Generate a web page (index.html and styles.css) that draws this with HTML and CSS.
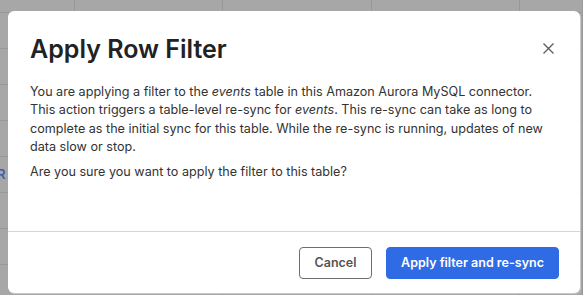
FILE: index.html
```html
<!DOCTYPE html>
<html>
<head>
<meta charset="utf-8">
<link rel="stylesheet" href="styles.css">
</head>
<body>
<div class="page">
  <div class="table">
    <div class="row"><div class="cell"></div><div class="cell"></div><div class="cell"></div><div class="cell"></div><div class="cell"></div></div>
    <div class="row"><div class="cell"></div><div class="cell"></div><div class="cell"></div><div class="cell"></div><div class="cell"></div></div>
    <div class="row"><div class="cell"></div><div class="cell"></div><div class="cell"></div><div class="cell"></div><div class="cell"></div></div>
    <div class="row"><div class="cell"></div><div class="cell"></div><div class="cell"></div><div class="cell"></div><div class="cell"></div></div>
    <div class="row"><div class="cell"></div><div class="cell"></div><div class="cell"></div><div class="cell"></div><div class="cell"></div></div>
    <div class="row"><div class="cell link">R</div><div class="cell"></div><div class="cell"></div><div class="cell"></div><div class="cell"></div></div>
    <div class="row"><div class="cell"></div><div class="cell"></div><div class="cell"></div><div class="cell"></div><div class="cell"></div></div>
    <div class="row"><div class="cell"></div><div class="cell"></div><div class="cell"></div><div class="cell"></div><div class="cell"></div></div>
    <div class="row"><div class="cell"></div><div class="cell"></div><div class="cell"></div><div class="cell"></div><div class="cell"></div></div>
  </div>
  <div class="modal">
    <div class="modal-body">
      <div class="modal-head">
        <h1 class="title">Apply Row Filter</h1>
        <button class="close" aria-label="Close">
          <svg width="11" height="11" viewBox="0 0 11 11"><path d="M0.5 0.5L10.5 10.5M10.5 0.5L0.5 10.5" stroke="#5f5f5f" stroke-width="1.4" fill="none"/></svg>
        </button>
      </div>
      <p class="text">You are applying a filter to the <em>events</em> table in this Amazon Aurora MySQL connector. This action triggers a table-level re-sync for <em>events</em>. This re-sync can take as long to complete as the initial sync for this table. While the re-sync is running, updates of new data slow or stop.</p>
      <p class="text">Are you sure you want to apply the filter to this table?</p>
    </div>
    <div class="modal-foot">
      <button class="btn btn-secondary">Cancel</button>
      <button class="btn btn-primary">Apply filter and re-sync</button>
    </div>
  </div>
</div>
</body>
</html>
```

FILE: styles.css
```css
* { box-sizing: border-box; }
html, body { margin: 0; padding: 0; }
body {
  width: 583px;
  height: 295px;
  overflow: hidden;
  background: #a7a7a7;
  font-family: Inter, "Noto Sans", sans-serif;
}
.page {
  position: relative;
  width: 583px;
  height: 295px;
  display: flow-root;
}
.table {
  display: flex;
  flex-direction: column;
  margin-top: -23px;
}
.row {
  display: grid;
  grid-template-columns: 75px 148px 149px 148px 63px;
  height: 36px;
  flex: none;
  border-bottom: 1px solid #989898;
}
.cell {
  border-right: 1px solid #989898;
}
.link {
  color: #3f5ea8;
  font-weight: 600;
  font-size: 13px;
  line-height: 35px;
  text-indent: -3px;
}
.modal {
  position: absolute;
  left: 8px;
  top: 11px;
  width: 572px;
  height: 282px;
  background: #fff;
  border-radius: 6px;
  display: flex;
  flex-direction: column;
  box-shadow: 1px 1px 0 #c9c9cc;
}
.modal-body {
  flex: 1;
  padding: 23px 22px 0 22px;
}
.modal-head {
  display: flex;
  justify-content: space-between;
  align-items: center;
  height: 30px;
}
.title {
  margin: 0;
  font-size: 25px;
  line-height: 30px;
  font-weight: 600;
  color: #222;
}
.close {
  border: none;
  background: none;
  padding: 0;
  margin-right: 4px;
  margin-top: -2px;
  display: flex;
}
.text {
  margin: 19px 0 0 0;
  max-width: 520px;
  font-size: 12.6px;
  line-height: 18.3px;
  color: #333;
}
.text + .text { margin-top: 6.5px; }
.modal-foot {
  border-top: 1px solid #d3d3da;
  height: 62px;
  flex: none;
  display: flex;
  justify-content: flex-end;
  align-items: center;
  gap: 14px;
  padding: 0 21px 0 0;
}
.btn {
  height: 32px;
  border-radius: 4px;
  font-family: Inter, "Noto Sans", sans-serif;
  font-size: 12.5px;
  font-weight: 600;
  padding: 0;
  white-space: nowrap;
  cursor: pointer;
}
.btn-secondary {
  background: #fff;
  border: 1px solid #6e6e6e;
  color: #555;
  width: 73px;
}
.btn-primary {
  background: #2f6be4;
  border: 1px solid #2f6be4;
  color: #fff;
  width: 173px;
}
```
